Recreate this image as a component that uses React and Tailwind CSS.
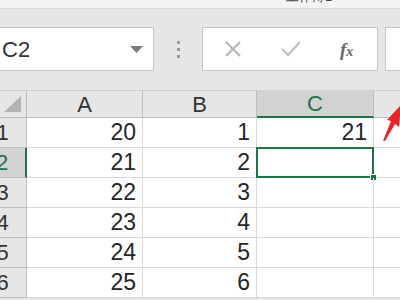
import React from "react";

const cols = ["A", "B", "C"];
const rows = [
  [20, 1, 21],
  [21, 2, null],
  [22, 3, null],
  [23, 4, null],
  [24, 5, null],
  [25, 6, null],
];

const App = () => {
  return (
    <div
      className="relative w-[400px] h-[300px] overflow-hidden bg-[#e6e6e6] text-[#262626]"
      style={{ fontFamily: '"Liberation Sans", Arial, sans-serif' }}
    >
      {/* title strip */}
      <div className="h-[9px] bg-[#f3f3f3] border-b border-[#d9d9d9] overflow-hidden flex">
        <span className="text-[13px] leading-none -mt-[10px] ml-[286px] text-[#444]">工作簿1</span>
      </div>

      {/* formula bar */}
      <div className="flex items-center h-[44px] mt-[18px]">
        <div className="ml-[-20px] w-[174px] h-[44px] bg-white border border-[#c6c6c6] flex items-center justify-between pl-[21px] pr-[10px]">
          <span className="text-[22px] text-[#333]">C2</span>
          <svg width="13" height="7" viewBox="0 0 13 7">
            <polygon points="0,0 13,0 6.5,7" fill="#7a7a7a" />
          </svg>
        </div>
        <div className="w-[48px] flex flex-col items-center gap-[4px]">
          <span className="w-[3px] h-[3px] bg-[#9a9a9a]" />
          <span className="w-[3px] h-[3px] bg-[#9a9a9a]" />
          <span className="w-[3px] h-[3px] bg-[#9a9a9a]" />
        </div>
        <div className="w-[176px] h-[44px] bg-white border border-[#c6c6c6] flex items-center">
          <svg width="18" height="18" viewBox="0 0 18 18" className="ml-[21px]">
            <path d="M2 2 L16 16 M16 2 L2 16" stroke="#b4b4b4" strokeWidth="2" />
          </svg>
          <svg width="22" height="18" viewBox="0 0 22 18" className="ml-[38px]">
            <path d="M2 9 L8 15 L20 2" stroke="#c2c2c2" strokeWidth="2.4" fill="none" />
          </svg>
          <span
            className="ml-[38px] text-[19px] italic font-bold text-[#6b6b6b] leading-none"
            style={{ fontFamily: '"Liberation Serif", serif' }}
          >
            f<span className="text-[14px]">x</span>
          </span>
        </div>
        <div className="ml-[7px] flex-1 h-[44px] bg-white border border-[#c6c6c6] mr-[-10px]" />
      </div>

      {/* grid */}
      <div className="mt-[19px] ml-[-21px] grid grid-cols-[48px_116px_114px_117px_80px] bg-white">
        <div className="h-[28px] bg-[#e6e6e6] border-t border-[#cfcfcf] border-r border-r-[#bdbdbd] border-b border-b-[#bdbdbd] flex items-end justify-end pr-[5px] pb-[5px]">
          <svg width="17" height="16" viewBox="0 0 17 16">
            <polygon points="17,0 17,16 0,16" fill="#b3b3b3" />
          </svg>
        </div>
        {cols.map((c) => (
          <div
            key={c}
            className={
              c === "C"
                ? "h-[28px] bg-[#d2d2d2] border-t border-[#cfcfcf] border-r border-r-[#bdbdbd] border-b-2 border-b-[#217346] flex items-center justify-center text-[22px] text-[#217346]"
                : "h-[28px] bg-[#e6e6e6] border-t border-[#cfcfcf] border-r border-r-[#bdbdbd] border-b border-b-[#bdbdbd] flex items-center justify-center text-[22px] text-[#333]"
            }
          >
            {c}
          </div>
        ))}
        <div className="h-[28px] bg-[#e6e6e6] border-t border-[#cfcfcf] border-b border-b-[#bdbdbd]" />

        {rows.map((r, i) => (
          <React.Fragment key={i}>
            <div
              className={
                i === 1
                  ? "h-[30px] bg-[#d2d2d2] border-r-2 border-r-[#217346] border-b border-b-[#bdbdbd] flex items-center justify-center text-[22px] text-[#217346]"
                  : "h-[30px] bg-[#e6e6e6] border-r border-r-[#bdbdbd] border-b border-b-[#bdbdbd] flex items-center justify-center text-[22px] text-[#333]"
              }
            >
              {i + 1}
            </div>
            {r.map((v, j) => (
              <div
                key={j}
                className="relative h-[30px] border-r border-b border-[#d9d9d9] flex items-center justify-end pr-[6px] text-[23px]"
              >
                {v}
                {i === 1 && j === 2 && (
                  <div className="absolute -left-[1px] -top-[1px] -right-[1px] -bottom-[1px] border-2 border-[#217346]">
                    <span className="absolute -right-[5px] -bottom-[5px] w-[7px] h-[7px] bg-[#217346] border border-white" />
                  </div>
                )}
              </div>
            ))}
            <div className="h-[30px] border-b border-[#d9d9d9]" />
          </React.Fragment>
        ))}
      </div>

      {/* red arrow annotation */}
      <svg className="absolute left-[380px] top-[100px]" width="22" height="44" viewBox="0 0 22 44">
        <polygon points="21,5 7,20 11,21 3,41 5,41 15,24 19,27" fill="#e8262a" />
      </svg>
    </div>
  );
};

export default App;
